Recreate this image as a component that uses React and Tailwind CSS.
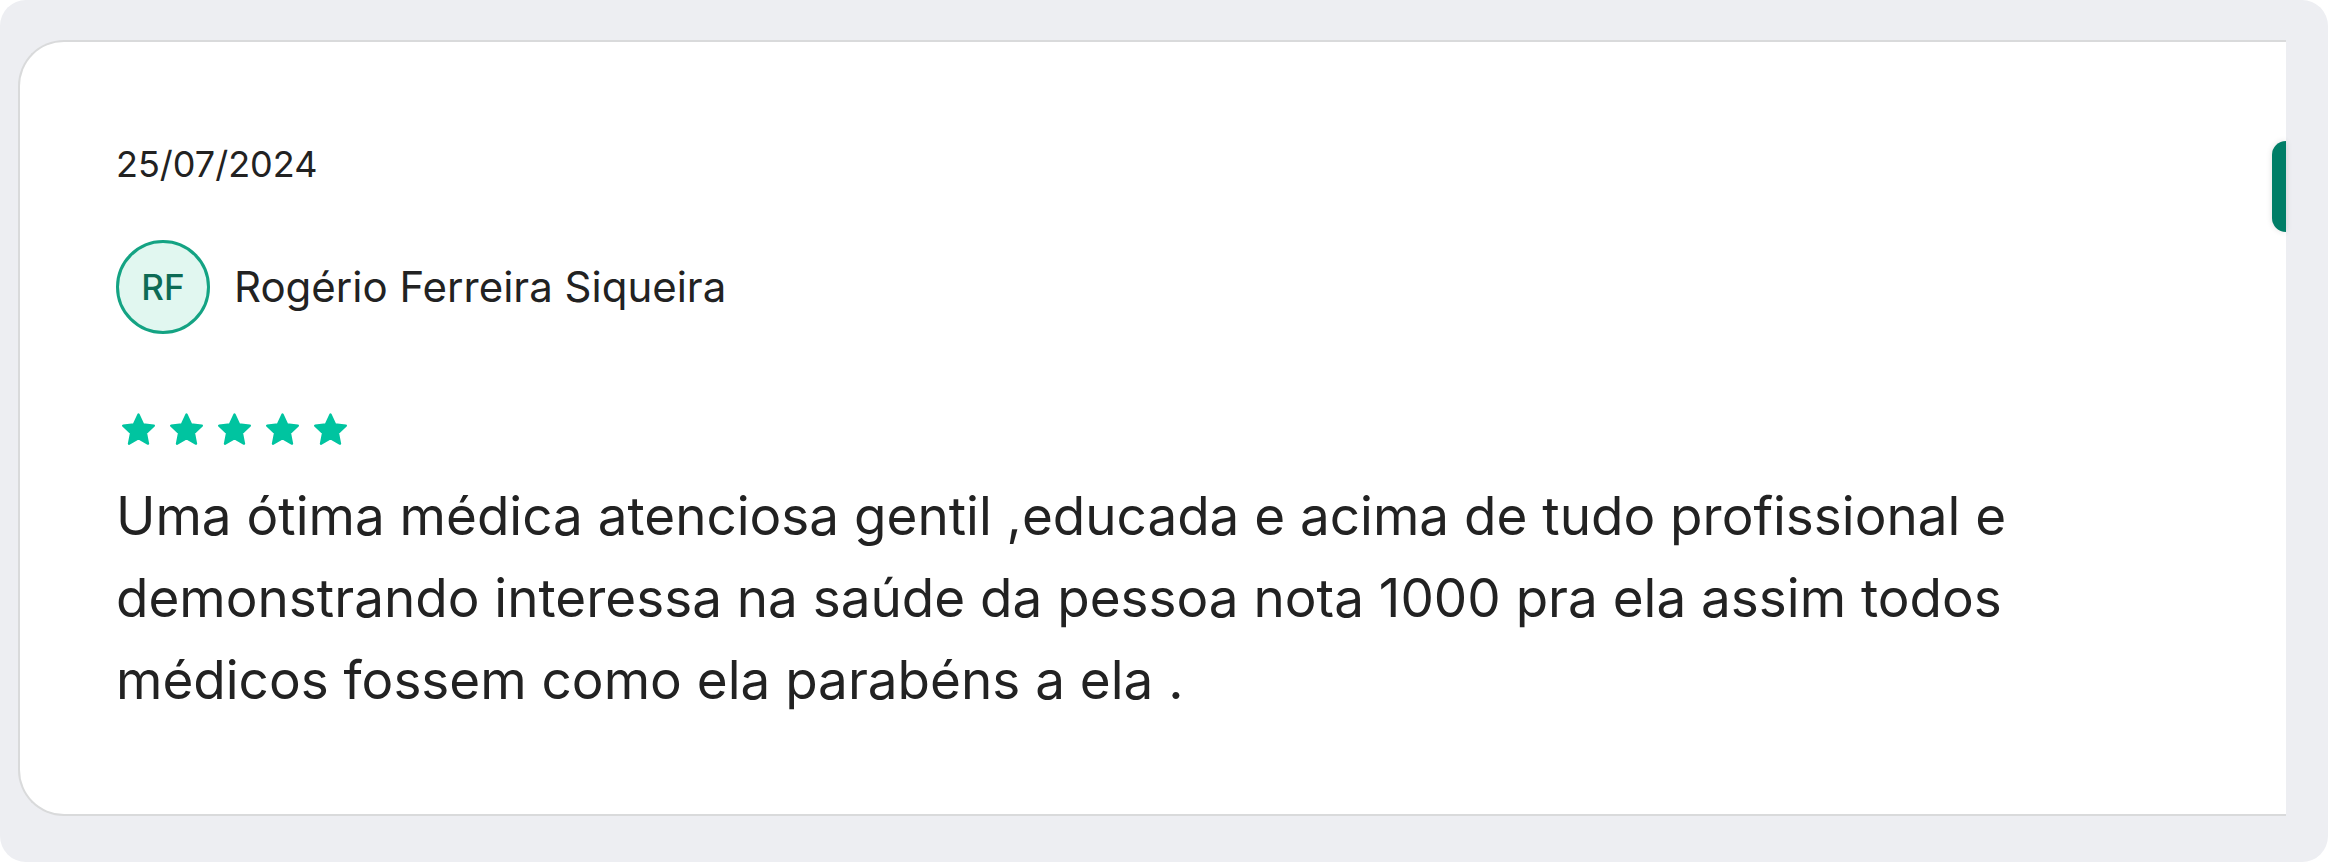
import React from "react";

function Star() {
  return (
    <svg width="33" height="32" viewBox="2.2 1.9 19.6 19" className="shrink-0">
      <path
        d="M12 2.8l2.75 5.9 6.35.75-4.7 4.35 1.25 6.3L12 16.95 6.35 20.1l1.25-6.3L2.9 9.45l6.35-.75z"
        fill="#00c4a0"
        stroke="#00c4a0"
        strokeWidth="1.4"
        strokeLinejoin="round"
      />
    </svg>
  );
}

export default function App() {
  return (
    <div className="w-[2328px] h-[862px] bg-white" style={{ fontFamily: "Inter, 'Noto Sans', sans-serif" }}>
      <div className="w-full h-full bg-[#edeef2] rounded-[26px] pl-[18px] pt-[40px] pb-[46px] pr-[42px]">
        <div className="relative h-full bg-white border-l-2 border-t-2 border-b-2 border-[#d9dadb] rounded-l-[46px] pl-[96px] pt-[100px]">
          <div className="text-[36px] leading-[44px] text-[#222]">25/07/2024</div>
          <div className="mt-[54px] flex items-center gap-[24px]">
            <div className="w-[94px] h-[94px] rounded-full border-[3px] border-[#14a383] bg-[#e1f7f0] flex items-center justify-center text-[35px] font-medium text-[#0d6b55]">
              RF
            </div>
            <div className="text-[42px] leading-[48px] text-[#222]">Rogério Ferreira Siqueira</div>
          </div>
          <div className="mt-[79px] flex gap-[15px] pl-[6px]">
            <Star />
            <Star />
            <Star />
            <Star />
            <Star />
          </div>
          <p className="mt-[30px] w-[2010px] text-[53px] leading-[82px] text-[#222]">
            Uma ótima médica atenciosa gentil ,educada e acima de tudo profissional e demonstrando interessa na saúde da pessoa nota 1000 pra ela assim todos médicos fossem como ela parabéns a ela .
          </p>
          <div className="absolute right-0 top-[99px] w-[14px] h-[91px] bg-[#007e67] rounded-l-[16px] shadow-[0_0_6px_rgba(0,0,0,0.12)]"></div>
        </div>
      </div>
    </div>
  );
}
